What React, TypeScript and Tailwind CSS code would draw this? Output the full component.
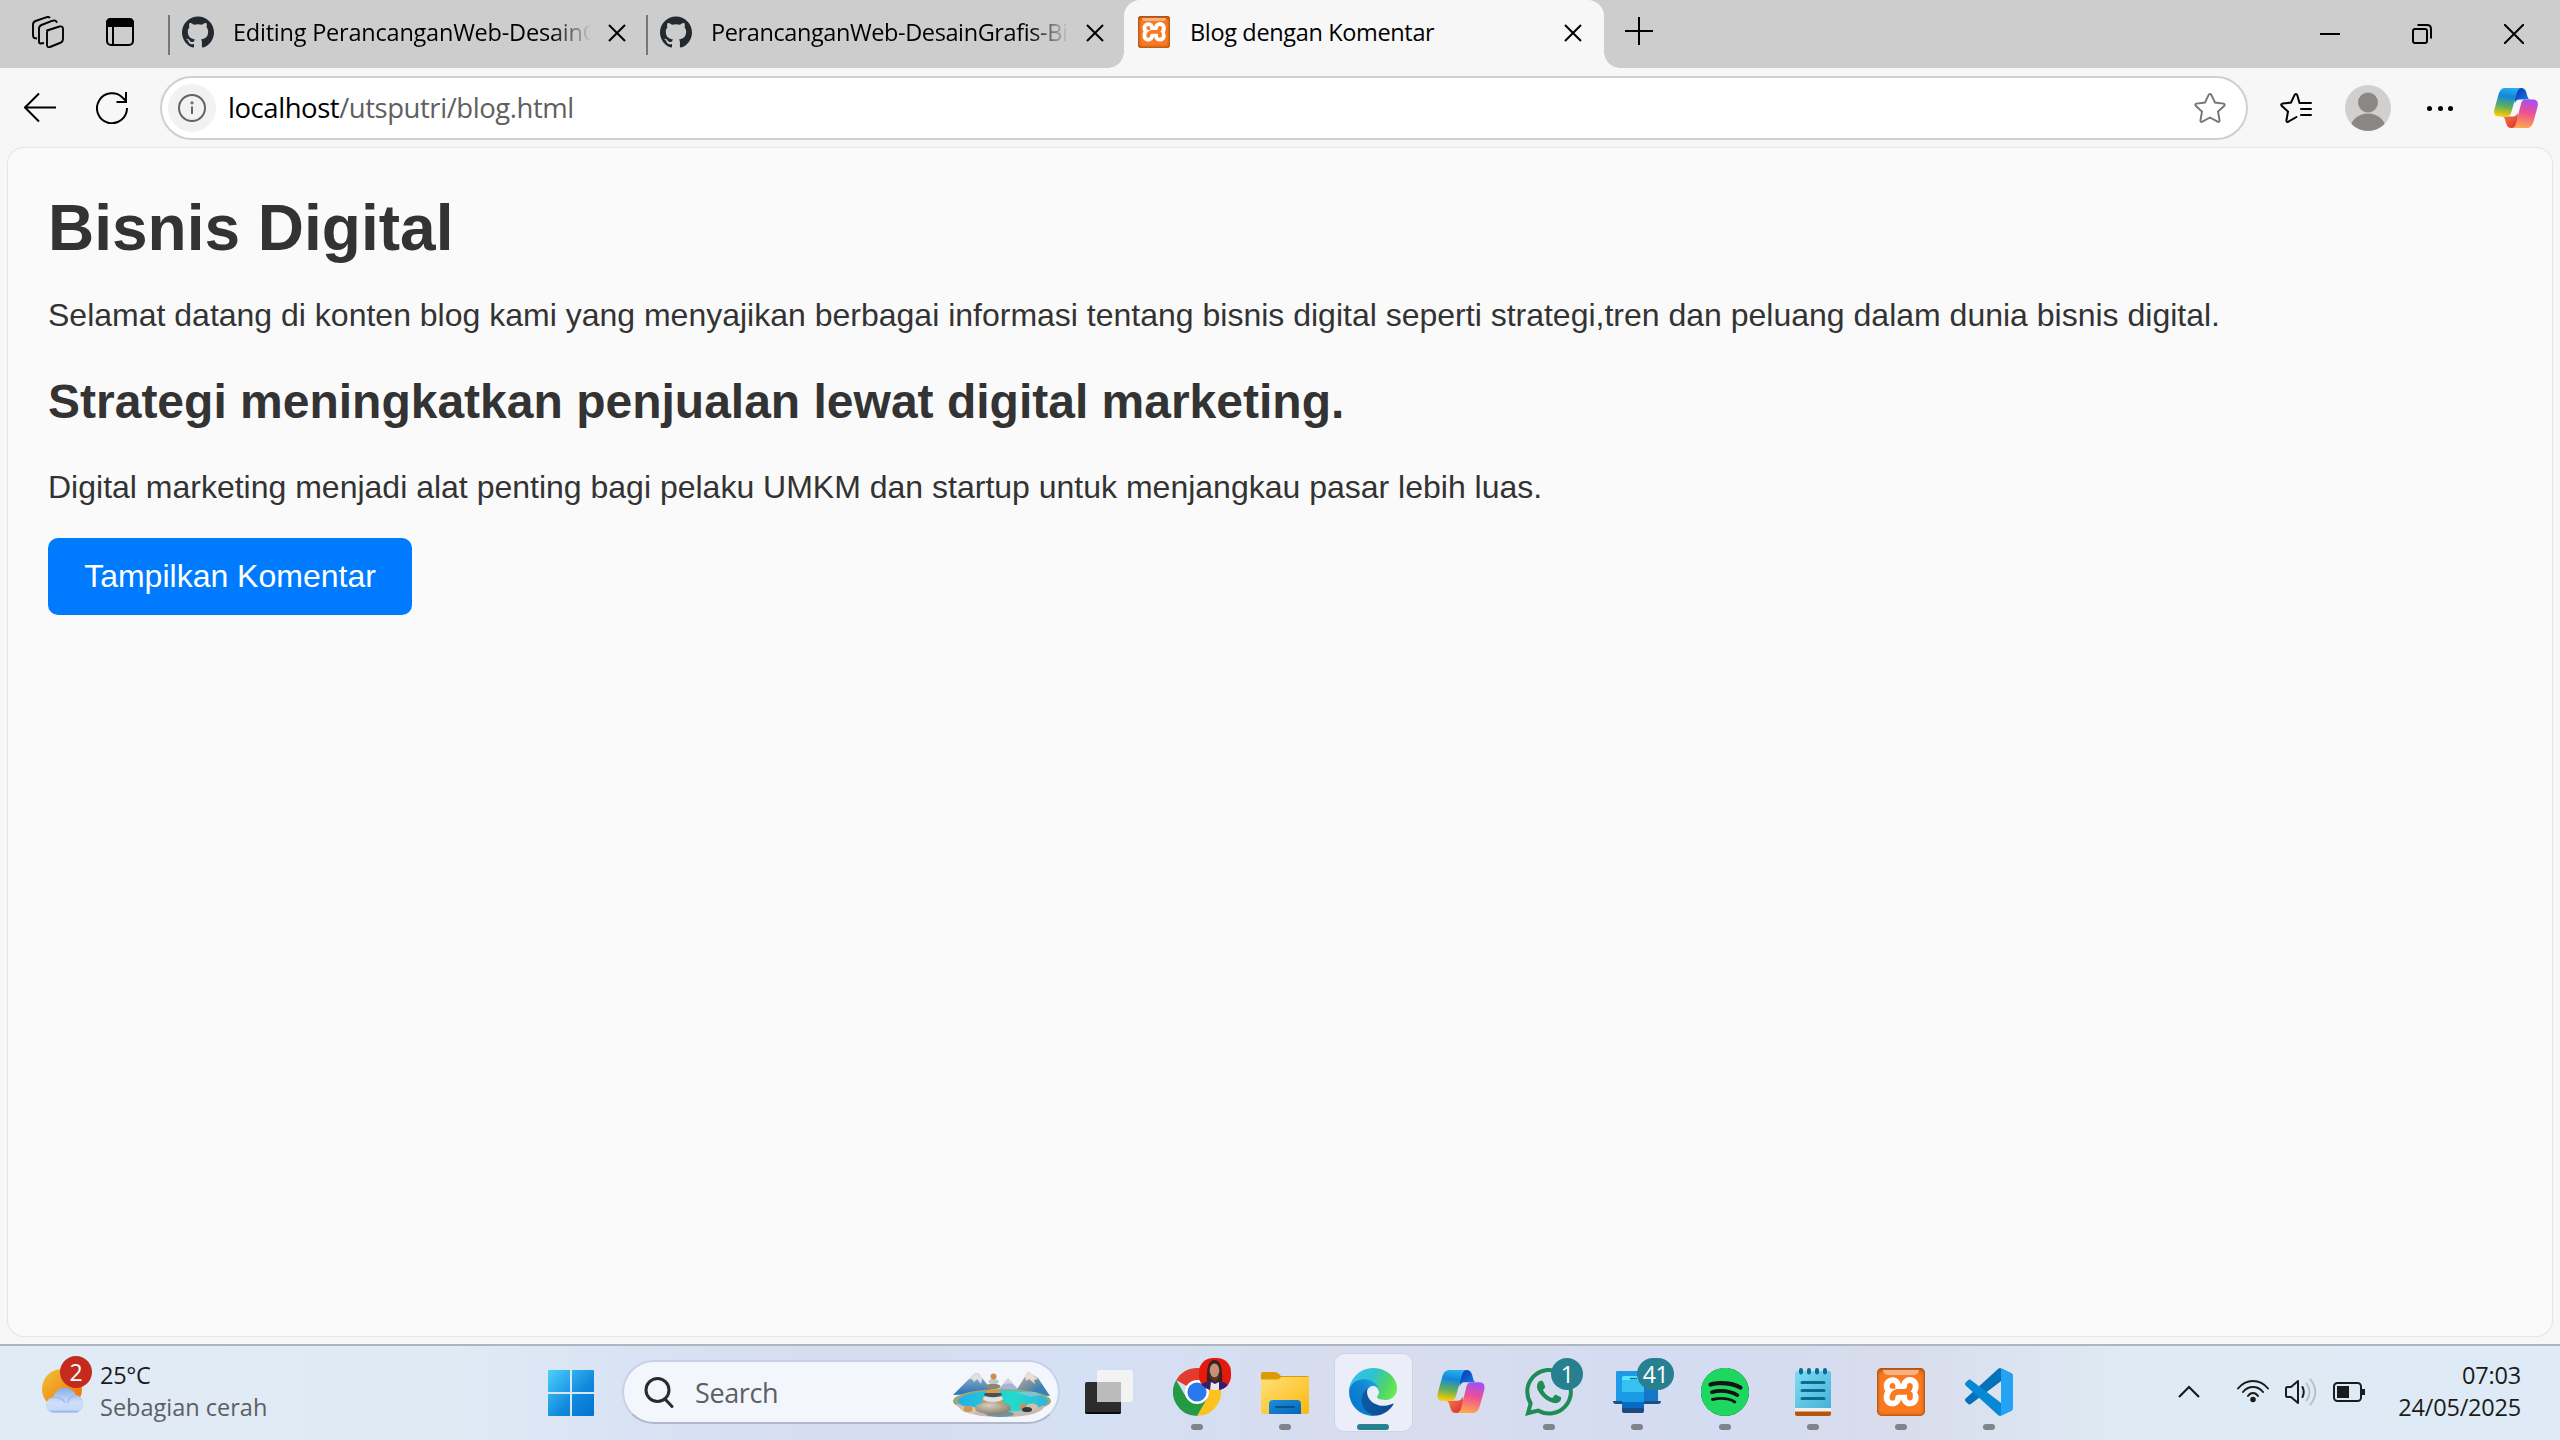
import React from "react";
import type { ReactNode } from "react";
import { SiGithub, SiXampp, SiSpotify, SiWhatsapp } from "react-icons/si";

function CloseIcon({ className }: { className: string }) {
  return (
    <svg viewBox="0 0 18 18" className={className} fill="none" stroke="#000" strokeWidth="2">
      <path d="M1 1l16 16M17 1L1 17" />
    </svg>
  );
}

function XamppIcon({ className }: { className: string }) {
  return (
    <span className={"relative block shrink-0 overflow-hidden rounded-[10%] bg-white shadow-[inset_0_0_0_1px_#b5550f] " + className}>
      <SiXampp className="block h-full w-full text-[#f97a20]" />
      <span className="absolute inset-0 rounded-[10%] bg-gradient-to-b from-[#a8480088] via-transparent via-15% to-transparent shadow-[inset_0_0_3px_1px_#a34f12]" />
      <span className="absolute left-[12%] right-[12%] top-[5%] h-[10%] rounded-b-full bg-[#f5b385]" />
    </span>
  );
}

function CopilotIcon({ id, className }: { id: string; className: string }) {
  return (
    <svg viewBox="0 0 44 40" className={className}>
      <defs>
        <linearGradient id={id + "a"} x1="0.55" y1="0" x2="0.4" y2="1">
          <stop offset="0" stopColor="#27aef0" />
          <stop offset="0.3" stopColor="#1087dc" />
          <stop offset="0.65" stopColor="#5fae5c" />
          <stop offset="1" stopColor="#fccb05" />
        </linearGradient>
        <linearGradient id={id + "b"} x1="0.6" y1="0" x2="0.4" y2="1">
          <stop offset="0" stopColor="#a54ff0" />
          <stop offset="0.45" stopColor="#ee5093" />
          <stop offset="1" stopColor="#ffa94e" />
        </linearGradient>
        <linearGradient id={id + "c"} x1="0" y1="0" x2="1" y2="1">
          <stop offset="0" stopColor="#0a2bb0" />
          <stop offset="1" stopColor="#1790f0" />
        </linearGradient>
        <linearGradient id={id + "d"} x1="0" y1="0" x2="1" y2="1">
          <stop offset="0" stopColor="#ff8a3c" />
          <stop offset="1" stopColor="#d92a3a" />
        </linearGradient>
      </defs>
      <path d="M20 0h7c3 0 4.500 1.500 5.300 4.500L33.500 8.500c.6 2 1.500 3 3.500 3H25.500c-3 0-4 2-4.700 4z" fill={`url(#${id}c)`} />
      <path d="M24 40h-6.500c-3 0-4.500-1.500-5.300-4.500L11 31.500c-.6-2-1.500-3-4-3h12c3 0 4-2 4.700-4z" fill={`url(#${id}d)`} />
      <path d="M11.500 0H28c-3 0-4.300 2-5.200 5l-5.300 18.500C16.400 27.500 15 28.500 12 28.500H5C1 28.500-.8 26 .5 21L4.500 6.500C5.900 1.800 8 0 11.500 0z" fill={`url(#${id}a)`} />
      <path d="M32.500 40H17c3 0 4.300-2 5.200-5l4.600-18.500c1-4 2.400-5 5.200-5h7c4 0 5.800 2.500 4.500 7.500l-4 14.500C38.100 38.200 36 40 32.500 40z" fill={`url(#${id}b)`} />
    </svg>
  );
}

function EdgeIcon() {
  return (
    <svg viewBox="0 0 256 256" className="size-12">
      <defs>
        <linearGradient id="eg1" x1="0.1" y1="0.5" x2="1" y2="0.6">
          <stop offset="0" stopColor="#0c59a4" />
          <stop offset="1" stopColor="#114a8b" />
        </linearGradient>
        <linearGradient id="eg2" x1="0.9" y1="0.3" x2="0.2" y2="0.9">
          <stop offset="0" stopColor="#1b9de2" />
          <stop offset="0.4" stopColor="#1283d0" />
          <stop offset="1" stopColor="#0078d4" />
        </linearGradient>
        <linearGradient id="eg3" x1="0" y1="0.3" x2="1" y2="0.6">
          <stop offset="0" stopColor="#35c1f1" />
          <stop offset="0.45" stopColor="#2fc3ce" />
          <stop offset="0.75" stopColor="#4dd46f" />
          <stop offset="1" stopColor="#66eb4e" />
        </linearGradient>
      </defs>
      <g transform="translate(-4.630 -4.920)">
        <path fill="url(#eg1)" d="M235.680,195.460a93.730,93.730,0,0,1-10.540,4.710,101.870,101.870,0,0,1-35.900,6.460c-47.320,0-88.540-32.550-88.540-74.320A31.480,31.480,0,0,1,117.130,104.900c-42.800,1.800-53.800,46.400-53.800,72.530,0,73.880,68.090,81.370,82.760,81.370,7.910,0,19.840-2.300,27-4.560l1.310-.44A128.340,128.340,0,0,0,241,201.100a4,4,0,0,0-5.320-5.640Z" />
        <path fill="url(#eg2)" d="M110.340,246.340A79.200,79.200,0,0,1,87.600,225,80.720,80.720,0,0,1,117.130,104.900c3.120-1.470,8.450-4.130,15.540-4a32.350,32.350,0,0,1,25.690,13,31.880,31.880,0,0,1,6.360,18.660c0-.21,24.460-79.600-80-79.600-43.900,0-80,41.660-80,78.210a130.150,130.150,0,0,0,12.110,56,128,128,0,0,0,156.380,67.110,75.550,75.550,0,0,1-62.780-8Z" />
        <path fill="url(#eg3)" d="M156.940,153.780c-.81,1.050-3.300,2.500-3.300,5.660,0,2.610,1.700,5.120,4.720,7.230,14.380,10,41.490,8.680,41.560,8.680a59.560,59.560,0,0,0,30.270-8.350A61.380,61.380,0,0,0,260.600,114.100c.26-22.410-8-37.310-11.340-43.910C228.090,28.790,182.350,5,132.610,5a128,128,0,0,0-128,126.200c.48-36.540,36.800-66.050,80-66.050,3.500,0,23.460.34,42,10.070,16.340,8.580,24.900,18.940,30.850,29.210,6.180,10.670,7.280,24.150,7.280,29.520S162,147.200,156.940,153.780Z" />
      </g>
    </svg>
  );
}

function ChromeIcon() {
  return (
    <svg viewBox="0 0 48 48" className="size-12">
      <path d="M24 24L3.200 12A24 24 0 0 1 44.800 12z" fill="#e33b2e" />
      <path d="M24 12h20.800A24 24 0 0 1 24 48L34.400 30z" fill="#fcc31e" />
      <path d="M13.600 30L3.200 12A24 24 0 0 0 24 48L34.400 30 24 30z" fill="#259a45" />
      <circle cx="24" cy="24" r="12" fill="#fff" />
      <circle cx="24" cy="24" r="9.600" fill="#2a78ee" />
    </svg>
  );
}

function ProfilePhoto() {
  return (
    <svg viewBox="0 0 32 32" className="absolute -top-[10px] left-[26px] size-8 rounded-[14px]">
      <rect width="32" height="32" fill="#e51a0e" />
      <path d="M8 26C7 8 10 2 15.500 2S24 8 23 26z" fill="#3a2420" />
      <ellipse cx="15.500" cy="12.500" rx="4.800" ry="7" fill="#c79079" />
      <path d="M11 15c2 6 7 6 9 0v5l-4 4-5-4z" fill="#5b3429" />
      <path d="M0 32c1-6 5-8 10-8.500h12c4 .5 8 3 9 8.500z" fill="#33206b" />
      <path d="M12 24l4 2 4-2v8h-9z" fill="#ece6ea" />
    </svg>
  );
}

function FolderIcon() {
  return (
    <svg viewBox="0 0 48 48" className="size-12">
      <defs>
        <linearGradient id="fo" x1="0" y1="0" x2="1" y2="1">
          <stop offset="0" stopColor="#ffe07a" />
          <stop offset="1" stopColor="#fbb80e" />
        </linearGradient>
        <linearGradient id="fb" x1="0" y1="0" x2="1" y2="1">
          <stop offset="0" stopColor="#1b8fdc" />
          <stop offset="1" stopColor="#0864b8" />
        </linearGradient>
      </defs>
      <path d="M0 6q0-2 2-2h12q2 0 3.500 1.500L20 8h26q2 0 2 2v4H0z" fill="#dc9a06" />
      <path d="M0 11.500h16q2 0 3-1.200L20.500 9H47q1 0 1 1.500V44q0 2-2 2H2q-2 0-2-2z" fill="url(#fo)" />
      <path d="M8 46V36q0-4 4-4h24q4 0 4 4v10z" fill="url(#fb)" />
      <path d="M15 39h18" stroke="#0a4f92" strokeWidth="2" strokeLinecap="round" />
    </svg>
  );
}

function PhoneLinkIcon() {
  return (
    <svg viewBox="0 0 48 48" className="size-12">
      <path d="M3 5q0-2 2-2h38q2 0 2 2v28H3z" fill="#1477c8" />
      <path d="M3 5q0-2 2-2h22v30H3z" fill="#1e9be6" />
      <path d="M0 33h48q0 3-3 3H3q-3 0-3-3z" fill="#1b4f86" />
      <path d="M9 10q0-2 2-2h18q2 0 2 2v14H9z" fill="#38c2f4" />
      <path d="M9 24h22v10H9z" fill="#199be6" />
      <path d="M9 34h22v6H9z" fill="#0a6ac2" />
      <path d="M9 40h22v3q0 2-2 2H11q-2 0-2-2z" fill="#1a4a80" />
      <path d="M9 12v-2q0-2 2-2h18q2 0 2 2v2z" fill="#54e6fb" />
      <path d="M17 10.600h7" stroke="#1668a8" strokeWidth="1.400" />
    </svg>
  );
}

function NotepadIcon() {
  return (
    <svg viewBox="0 0 48 48" className="size-12">
      <defs>
        <linearGradient id="np" x1="0" y1="0" x2="1" y2="1">
          <stop offset="0" stopColor="#80dbf2" />
          <stop offset="1" stopColor="#45b3d8" />
        </linearGradient>
      </defs>
      <path d="M6 42h36v4q0 2-2 2H8q-2 0-2-2z" fill="#b4560c" />
      <path d="M6 38h36v5.500H6z" fill="#f1efee" />
      <path d="M6 5q0-2 2-2h32q2 0 2 2v35H6z" fill="url(#np)" />
      <path d="M12 2v2.500M20 2v2.500M28 2v2.500M36 2v2.500" stroke="#0b6c92" strokeWidth="4" strokeLinecap="round" />
      <path d="M13 14.500h22M13 22.500h22M13 30.500h22" stroke="#0b6c92" strokeWidth="3" strokeLinecap="round" />
    </svg>
  );
}

function VsCodeIcon() {
  return (
    <svg viewBox="0 0 100 100" className="size-12">
      <path fill="#0471b8" d="M96.461 10.796L75.857.876C73.472-.273 70.622.212 68.750 2.083L1.299 63.583c-1.815 1.654-1.813 4.511.004 6.162l5.510 5.009c1.485 1.350 3.722 1.450 5.321.237L93.361 13.370C96.086 11.303 100 13.246 100 16.667v-.24c0-2.401-1.375-4.590-3.539-5.631z" />
      <path fill="#0788d4" d="M96.461 89.204L75.857 99.125c-2.385 1.148-5.235.663-7.107-1.208L1.299 36.417c-1.815-1.654-1.813-4.511.004-6.162l5.510-5.009c1.485-1.350 3.722-1.450 5.321-.236L93.361 86.630C96.086 88.697 100 86.754 100 83.333v.24c0 2.401-1.375 4.589-3.539 5.631z" />
      <path fill="#24a3f4" d="M75.858 99.126c-2.386 1.148-5.236.663-7.108-1.209C71.056 100.223 75 98.590 75 95.328V4.672C75 1.410 71.056-.223 68.750 2.083 70.622.211 73.472-.274 75.858.874l20.601 9.907C98.623 11.822 100 14.011 100 16.413v67.174c0 2.402-1.377 4.592-3.541 5.633z" />
    </svg>
  );
}

function LakeIllustration() {
  return (
    <svg viewBox="0 0 100 48" className="h-12 w-[100px]">
      <defs>
        <linearGradient id="mt" x1="0" y1="0" x2="0" y2="1">
          <stop offset="0" stopColor="#9fb8cc" />
          <stop offset="1" stopColor="#256fb5" />
        </linearGradient>
        <linearGradient id="mr" x1="0" y1="0" x2="1" y2="1">
          <stop offset="0.2" stopColor="#bba48e" />
          <stop offset="0.7" stopColor="#3c7fb4" />
        </linearGradient>
        <linearGradient id="wt" x1="0" y1="0" x2="1" y2="0">
          <stop offset="0" stopColor="#22b0e6" />
          <stop offset="0.6" stopColor="#22dccb" />
          <stop offset="1" stopColor="#30b4de" />
        </linearGradient>
        <radialGradient id="st" cx="0.4" cy="0.3" r="0.8">
          <stop offset="0" stopColor="#d8cfbd" />
          <stop offset="1" stopColor="#7d7466" />
        </radialGradient>
      </defs>
      <path d="M44 22l12-13 13 13z" fill="#a3b6d8" />
      <path d="M52 12l4-4 5 5-3 1-2-1-2 2z" fill="#d6cfdc" />
      <path d="M1 25L22 4q3-2 5 0l15 19z" fill="url(#mt)" />
      <path d="M17 9l7-7 9 8-3-1-1 5-4-5-3 3-2-3z" fill="#dfe0e0" />
      <path d="M62 24L76 2l10 6 12 18z" fill="url(#mr)" />
      <path d="M73 6l3-5 10 8-4 1 1 4-6-5-3 2z" fill="#e8ddd0" />
      <ellipse cx="50" cy="31" rx="49" ry="12" fill="#9da777" />
      <path d="M4 34Q12 47 50 47t43-11z" fill="#c8b8b2" />
      <ellipse cx="51" cy="31" rx="45" ry="10.500" fill="url(#wt)" />
      <path d="M64 22l14 5 12-2-7-3z" fill="#a3c8d8" opacity="0.600" />
      <path d="M8 38q6-4 17 0l-2 6q-14-1-15-6z" fill="#d8c79f" />
      <ellipse cx="16" cy="39" rx="4.500" ry="3" fill="#cd9556" />
      <ellipse cx="48" cy="44" rx="14" ry="3" fill="#35759a" opacity="0.600" />
      <ellipse cx="41" cy="38" rx="18" ry="6.500" fill="url(#st)" />
      <circle cx="33" cy="30" r="3" fill="#d9994c" />
      <circle cx="48" cy="31" r="3" fill="#d9994c" />
      <ellipse cx="41" cy="28.500" rx="10" ry="3.500" fill="#dde3e8" />
      <ellipse cx="41" cy="24.500" rx="9" ry="2.800" fill="#4b5055" />
      <path d="M34 20h14v3H34z" fill="#d9994c" />
      <ellipse cx="41" cy="16.500" rx="7.500" ry="2.800" fill="#91836f" />
      <ellipse cx="41.500" cy="11.500" rx="5" ry="2.600" fill="#bcc8d0" />
      <circle cx="41.500" cy="6.500" r="3" fill="#cf8d45" />
      <circle cx="71" cy="36.500" r="3.300" fill="#bd9565" />
      <ellipse cx="80" cy="37" rx="6" ry="3.500" fill="#d3c1a5" />
      <ellipse cx="75" cy="39.500" rx="5" ry="2.600" fill="#353a40" />
    </svg>
  );
}

function WeatherIcon() {
  return (
    <svg viewBox="0 0 48 48" className="size-12">
      <defs>
        <linearGradient id="sun" x1="0" y1="0" x2="1" y2="1">
          <stop offset="0.1" stopColor="#eebb33" />
          <stop offset="0.8" stopColor="#f5760f" />
        </linearGradient>
        <linearGradient id="cl" x1="0" y1="0" x2="0" y2="1">
          <stop offset="0" stopColor="#86abea" />
          <stop offset="0.6" stopColor="#cfdff8" />
          <stop offset="0.900" stopColor="#c4d8f8" />
          <stop offset="1" stopColor="#7ea5ee" />
        </linearGradient>
      </defs>
      <circle cx="22" cy="23" r="20" fill="url(#sun)" />
      <path d="M13.500 46.500a7.500 7.500 0 0 1-.3-15A12 12 0 0 1 36 29 9 9 0 0 1 37 46.500z" fill="url(#cl)" />
      <path d="M13 31.500q8-1 12 5M36 29.500q-8 1-8 8" stroke="#9dbcf0" strokeWidth="1.500" fill="none" />
    </svg>
  );
}

function Tab({ title, className, textClass }: { title: string; className: string; textClass: string }) {
  return (
    <div className={"flex h-8 shrink-0 items-center " + className}>
      <SiGithub className="size-8 shrink-0 text-[#24292f]" />
      <span className={"ml-[19px] mr-[17px] h-8 w-[358px] shrink-0 overflow-hidden whitespace-nowrap text-[23.500px] leading-8 text-black [mask-image:linear-gradient(90deg,#000_89%,transparent_100%)] " + textClass}>
        {title}
      </span>
      <CloseIcon className="mt-px size-[18px] shrink-0" />
    </div>
  );
}

function TaskItem({ children, running = true }: { children: ReactNode; running?: boolean }) {
  return (
    <div className="flex w-[88px] shrink-0 flex-col items-center pt-[22px]">
      <div className="relative size-12">{children}</div>
      {running && <div className="mt-2 h-1.5 w-3 rounded-full bg-[#80838b]" />}
    </div>
  );
}

function CountBadge({ children, className }: { children: ReactNode; className: string }) {
  return (
    <span className={"absolute -top-[10px] flex h-8 items-center justify-center rounded-full bg-[#26808f] text-[23px] leading-none tracking-[-0.5px] text-white " + className}>
      {children}
    </span>
  );
}

function TabStrip() {
  return (
    <div className="flex h-[68px] items-start bg-[#cdcdcd]">
      <svg viewBox="0 0 32 32" className="ml-8 mt-4 size-8" fill="none" stroke="#000" strokeWidth="1.900" strokeLinejoin="round">
        <path d="M15 14.500l12.500-4q3.500-.8 3.500 2.500v10q0 2.500-2 3.500l-11 4.500q-3 1-3-2.500V17q0-2 1.500-3z" />
        <path d="M12 27l-3.500.5q-1.500 0-1.500-2V12.500q0-2.500 2.500-3.500L20 4.800q4-1.300 5 2M5 22.500l-2.500-.5Q1 21.500 1 19.500V8.500Q1 6 3.500 5L14 1.300q3-1 4 .7" />
      </svg>
      <svg viewBox="0 0 28 28" className="ml-[42px] mt-[18px] size-7" fill="none" stroke="#000" strokeWidth="2">
        <rect x="1" y="1" width="26" height="26" rx="4" />
        <path d="M1 8V5q0-4 4-4h18q4 0 4 4v3z" fill="#000" />
        <path d="M7 8v19" />
      </svg>
      <div className="ml-[34px] mt-[15px] h-10 w-0.5 bg-[#777]" />
      <Tab title="Editing PerancanganWeb-DesainGrafis" className="ml-3 mt-4" textClass="tracking-[-0.220px]" />
      <div className="ml-5 mt-[15px] h-10 w-0.5 bg-[#777]" />
      <Tab title="PerancanganWeb-DesainGrafis-Bisnis" className="ml-3 mt-4" textClass="tracking-[-0.400px]" />
      <div className="ml-1 flex h-[68px] items-end overflow-hidden">
        <div className="size-4 bg-[radial-gradient(circle_at_0_0,#cdcdcd_15.500px,#f7f7f7_16px)]" />
        <div className="flex h-full w-[480px] items-start rounded-t-2xl bg-[#f7f7f7]">
          <XamppIcon className="ml-[14px] mt-4 size-8" />
          <span className="ml-5 mt-4 w-[374px] whitespace-nowrap text-[23.500px] leading-8 tracking-[-0.35px] text-black">Blog dengan Komentar</span>
          <CloseIcon className="mt-6 size-[18px]" />
        </div>
        <div className="size-4 bg-[radial-gradient(circle_at_100%_0,#cdcdcd_15.500px,#f7f7f7_16px)]" />
      </div>
      <svg viewBox="0 0 28 28" className="ml-[5px] mt-[17px] size-7" stroke="#000" strokeWidth="2">
        <path d="M14 0v28M0 14h28" />
      </svg>
      <div className="ml-auto mr-9 flex h-[68px] items-center gap-[72px]">
        <svg viewBox="0 0 20 20" className="size-5" stroke="#000" strokeWidth="2">
          <path d="M0 10h20" />
        </svg>
        <svg viewBox="0 0 20 20" className="size-5" fill="none" stroke="#000" strokeWidth="2">
          <rect x="1" y="5" width="14" height="14" rx="2" />
          <path d="M5.500 1H15q4 0 4 4v9.500" />
        </svg>
        <svg viewBox="0 0 20 20" className="size-5" stroke="#000" strokeWidth="2">
          <path d="M0 0l20 20M20 0L0 20" />
        </svg>
      </div>
    </div>
  );
}

const STAR = "M16 2q1 0 1.600 1.300L21 10.500l8.500 1.100q2 .5.800 2.200L24 19.500l1.600 9q0 2-2 1.200L16 25.500l-7.600 4.200q-2 .8-2-1.200l1.600-9L1.700 13.800Q.5 12.100 2.500 11.600L11 10.500l3.400-7.200Q15 2 16 2z";

function Toolbar() {
  return (
    <div className="flex h-20 items-center bg-[#f7f7f7]">
      <svg viewBox="0 0 32 32" className="ml-6 size-8" fill="none" stroke="#000" strokeWidth="2">
        <path d="M15 1.500L1 15.500l14 14M1 15.500h31" />
      </svg>
      <svg viewBox="0 0 32 32" className="ml-10 size-8" fill="none" stroke="#000" strokeWidth="2">
        <path d="M31 16A15 15 0 1 1 27 6l3.500 3.500M30 0v10H20.500" />
      </svg>
      <div className="ml-8 flex h-16 w-[2088px] items-center rounded-full border-2 border-[#cfcfcf] bg-white">
        <div className="ml-1.5 flex size-12 items-center justify-center rounded-full bg-[#f2f2f2]">
          <svg viewBox="0 0 28 28" className="size-7" fill="none" stroke="#636363" strokeWidth="2">
            <circle cx="14" cy="14" r="13" />
            <path d="M14 12.500V20" />
            <circle cx="14" cy="8.800" r="0.600" />
          </svg>
        </div>
        <span className="ml-[12px] whitespace-nowrap text-[27.500px] leading-9 tracking-[-0.450px] text-[#5f5f5f]">
          <span className="text-black">localhost</span>/utsputri/blog.html
        </span>
        <svg viewBox="0 0 32 32" className="ml-auto mr-5 size-8" fill="none" stroke="#767676" strokeWidth="1.900">
          <path d={STAR} />
        </svg>
      </div>
      <svg viewBox="0 0 32 32" className="ml-8 size-8" fill="none" stroke="#000" strokeWidth="2" strokeLinecap="round">
        <path d="M19.500 11L17.300 3.300Q16.800 2 15.900 2t-1.500 1.300L11 10.500l-8.500 1.100q-2 .5-.8 2.200L8 19.500l-1.600 9q0 2 2 1.200L16.500 25" />
        <path d="M20.500 11H31M21 17h10M21 23h10" />
      </svg>
      <svg viewBox="0 0 46 46" className="ml-[33px] size-[46px]">
        <defs>
          <clipPath id="pc">
            <circle cx="23" cy="23" r="23" />
          </clipPath>
        </defs>
        <g clipPath="url(#pc)">
          <rect width="46" height="46" fill="#d2d0ce" />
          <circle cx="23" cy="17.500" r="10" fill="#8a8886" />
          <ellipse cx="23" cy="45" rx="18" ry="16.500" fill="#8a8886" />
        </g>
      </svg>
      <div className="ml-9 flex gap-[5.500px]">
        <div className="size-[5px] rounded-full bg-black" />
        <div className="size-[5px] rounded-full bg-black" />
        <div className="size-[5px] rounded-full bg-black" />
      </div>
      <CopilotIcon id="tb" className="ml-auto mr-[22px] h-10 w-11" />
    </div>
  );
}

function Page() {
  return (
    <main className="mx-2 flex h-[1188px] flex-col items-start rounded-2xl bg-[#fafafa] px-10 pt-[43px] font-['Liberation_Sans',Arial,sans-serif] text-[#333] shadow-[0_0_1px_1px_#e3e3e3]">
      <h1 className="text-[64px] font-bold leading-[74px]">Bisnis Digital</h1>
      <p className="mt-8 whitespace-nowrap text-[32px] leading-[37px]">
        Selamat datang di konten blog kami yang menyajikan berbagai informasi tentang bisnis digital seperti strategi,tren dan peluang dalam dunia bisnis digital.
      </p>
      <h2 className="mt-10 whitespace-nowrap text-5xl font-bold leading-[55px]">Strategi meningkatkan penjualan lewat digital marketing.</h2>
      <p className="mt-10 whitespace-nowrap text-[32px] leading-[37px]">
        Digital marketing menjadi alat penting bagi pelaku UMKM dan startup untuk menjangkau pasar lebih luas.
      </p>
      <button className="mt-8 h-[77px] w-[364px] rounded-[10px] bg-[#007bff] pb-0.5 text-[32px] text-white">Tampilkan Komentar</button>
    </main>
  );
}

function Taskbar() {
  return (
    <footer className="mt-2 flex h-24 items-start border-t-2 border-[#adb5be] bg-[linear-gradient(90deg,#e0ebf5_0%,#dfeaf5_18%,#d7e3f4_25%,#d7dcf0_33%,#d4e0f4_42%,#d8dcee_54%,#d4dcf2_66%,#d8dcec_74%,#deeaf4_83%,#deeaf5_100%)]">
      <div className="flex w-[548px] shrink-0 items-start">
        <div className="relative ml-10 mt-5 size-12">
          <WeatherIcon />
          <span className="absolute -top-2.5 left-5 flex size-8 items-center justify-center rounded-full bg-[#c42b1c] text-[23px] leading-none text-white">2</span>
        </div>
        <div className="ml-[12px] mt-[13px] whitespace-nowrap text-[23.500px] leading-8">
          <div className="tracking-[-0.3px] text-[#1b1b1b]">25°C</div>
          <div className="text-[#5b5f64]">Sebagian cerah</div>
        </div>
      </div>
      <svg viewBox="0 0 46 46" className="mt-6 size-[46px] shrink-0">
        <defs>
          <linearGradient id="win" x1="0" y1="0" x2="46" y2="46" gradientUnits="userSpaceOnUse">
            <stop offset="0" stopColor="#4cd0fd" />
            <stop offset="0.600" stopColor="#1088dc" />
            <stop offset="1" stopColor="#0273cf" />
          </linearGradient>
        </defs>
        <path fill="url(#win)" d="M1 0h21v22H0V1q0-1 1-1zM24 0h21q1 0 1 1v21H24zM0 24h22v22H1q-1 0-1-1zM24 24h22v21q0 1-1 1H24z" />
      </svg>
      <div className="ml-[28px] mt-[14px] flex h-16 w-[438px] shrink-0 items-center rounded-full border-2 border-[#c8d1e6] border-b-[#b1b8cc] bg-[#f3f6fc]">
        <svg viewBox="0 0 30 32" className="ml-5 h-8 w-[30px]" fill="none" stroke="#2b2b2b" strokeWidth="3" strokeLinecap="round">
          <circle cx="13.500" cy="14" r="11.500" />
          <path d="M21 23l7 7.500" />
        </svg>
        <span className="ml-[21px] mt-0.5 text-[27px] leading-8 tracking-[-0.4px] text-[#5d5f63]">Search</span>
        <div className="ml-auto mr-1.5 mt-1">
          <LakeIllustration />
        </div>
      </div>
      <div className="flex w-[93px] shrink-0 pl-[25px] pt-6">
        <svg viewBox="0 0 48 44" className="h-11 w-12">
          <rect x="0" y="12" width="36" height="32" rx="2" fill="#2c2c2c" />
          <path d="M0 42h36q0 2-2 2H2q-2 0-2-2z" fill="#0a0a0a" />
          <rect x="12" y="0" width="36" height="32" rx="2" fill="#f3f3f3" />
          <rect x="12" y="12" width="24" height="20" fill="#bbb" />
        </svg>
      </div>
      <TaskItem>
        <ChromeIcon />
        <ProfilePhoto />
      </TaskItem>
      <TaskItem>
        <FolderIcon />
      </TaskItem>
      <div className="flex w-[88px] shrink-0 justify-center pt-2">
        <div className="flex h-[77px] w-[77px] flex-col items-center rounded-[9px] bg-[#ebeef8] pt-3.5 shadow-[0_0_0_1px_#cfd4e4]">
          <EdgeIcon />
          <div className="mt-2 h-1.5 w-8 rounded-full bg-[#26808f]" />
        </div>
      </div>
      <TaskItem running={false}>
        <CopilotIcon id="tk" className="mt-0.5 h-[43px] w-12" />
      </TaskItem>
      <TaskItem>
        <SiWhatsapp className="size-12 text-[#1f8b55]" />
        <CountBadge className="left-[26px] w-8">1</CountBadge>
      </TaskItem>
      <TaskItem>
        <PhoneLinkIcon />
        <CountBadge className="left-6 w-[37px]">41</CountBadge>
      </TaskItem>
      <TaskItem>
        <div className="size-12 rounded-full bg-[#141414]">
          <SiSpotify className="size-12 text-[#1ed760]" />
        </div>
      </TaskItem>
      <TaskItem>
        <NotepadIcon />
      </TaskItem>
      <TaskItem>
        <XamppIcon className="size-12" />
      </TaskItem>
      <TaskItem>
        <VsCodeIcon />
      </TaskItem>
      <div className="ml-auto mr-[39px] flex items-start">
        <svg viewBox="0 0 22 14" className="mr-[37px] mt-[39px] h-[14px] w-[22px]" fill="none" stroke="#1b1b1b" strokeWidth="2.200">
          <path d="M1 12L11 2l10 10" />
        </svg>
        <svg viewBox="0 0 32 24" className="mr-4 mt-[33px] h-6 w-8" fill="none" stroke="#1b1b1b" strokeWidth="2" strokeLinecap="round">
          <path d="M1 9.500Q7 2 16 2t15 7.500M6 13q4-5 10-5t10 5M11 17q2-3 5-3t5 3" />
          <circle cx="16" cy="20.500" r="1.800" fill="#1b1b1b" />
        </svg>
        <svg viewBox="0 0 32 28" className="mr-4 mt-8 h-7 w-8" fill="none" stroke="#1b1b1b" strokeWidth="2" strokeLinejoin="round" strokeLinecap="round">
          <path d="M1 10.500q0-1.500 1.500-1.500H6l7-6v22l-7-6H2.500Q1 19 1 17.500z" />
          <path d="M17.500 9q2.500 5 0 10" />
          <path d="M21.500 5.500q6 8.500 0 17M25.500 1.500q9.500 12.500 0 25" stroke="#b5bfc9" />
        </svg>
        <svg viewBox="0 0 32 20" className="mr-[33px] mt-9 h-5 w-8" fill="none" stroke="#1b1b1b" strokeWidth="2">
          <rect x="1" y="1" width="27" height="18" rx="3.500" />
          <path d="M4 4h12v12H4z" fill="#1b1b1b" stroke="none" />
          <path d="M29 7h3v6h-3z" fill="#1b1b1b" stroke="none" />
        </svg>
        <div className="mt-[13px] whitespace-nowrap text-right text-[23.500px] leading-8 tracking-[-0.200px] text-[#1b1b1b]">
          <div>07:03</div>
          <div>24/05/2025</div>
        </div>
      </div>
    </footer>
  );
}

export default function App() {
  return (
    <div className="h-[1440px] w-[2560px] overflow-hidden bg-[#f7f7f7] font-['Open_Sans','Noto_Sans',sans-serif]">
      <TabStrip />
      <Toolbar />
      <Page />
      <Taskbar />
    </div>
  );
}
